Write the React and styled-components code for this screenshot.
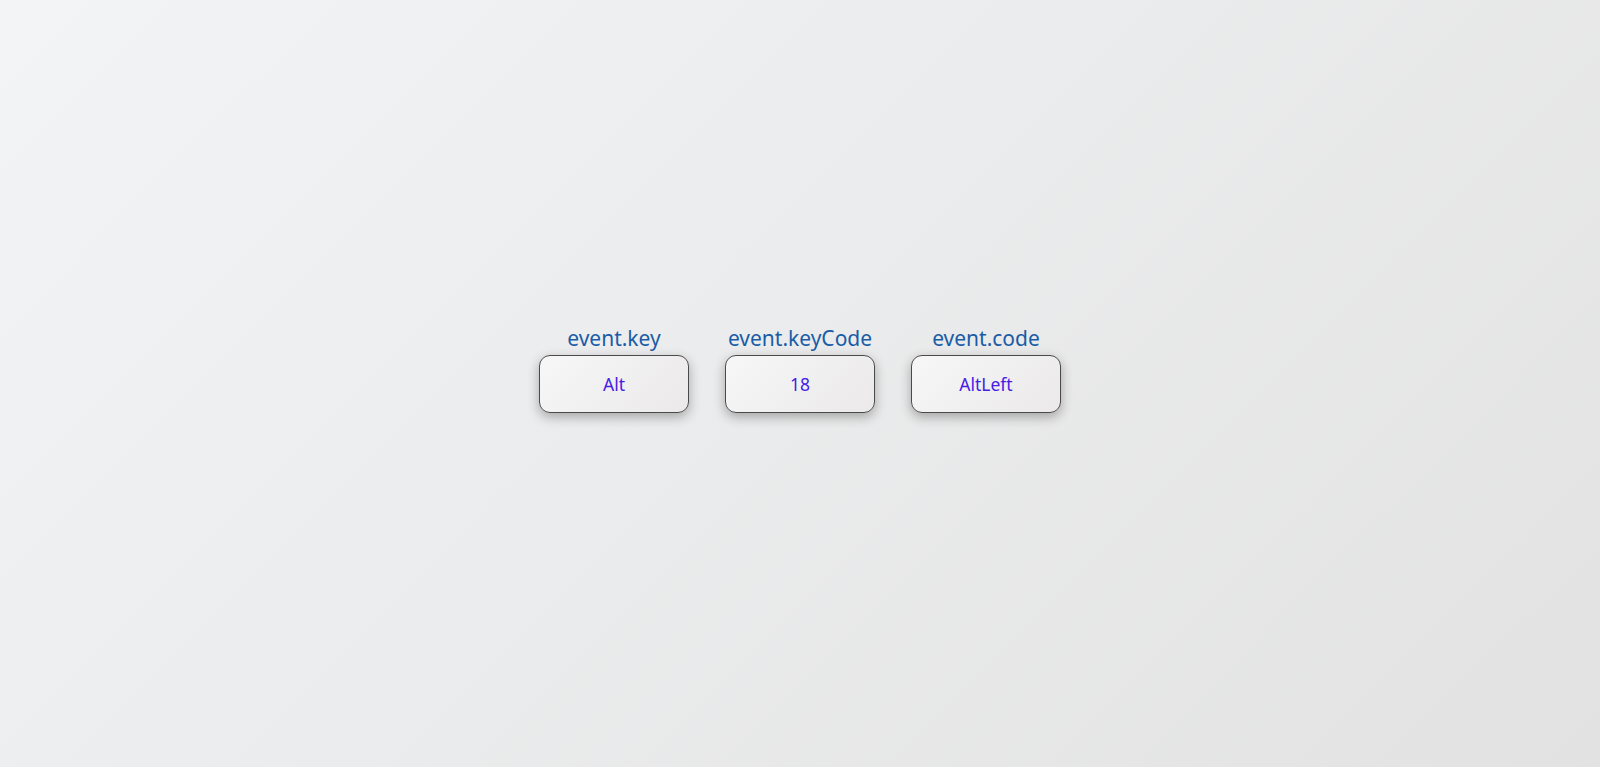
import React from "react";
import styled, { createGlobalStyle } from "styled-components";

const Global = createGlobalStyle`
  html, body { margin: 0; padding: 0; height: 100%; }
  body {
    font-family: "Segoe UI", "Noto Sans", "Open Sans", sans-serif;
    background: linear-gradient(135deg, #f3f4f6 0%, #e2e2e2 100%);
    background-attachment: fixed;
  }
  #root { min-height: 100vh; }
`;

const Page = styled.main`
  min-height: 100vh;
  display: flex;
  align-items: center;
  justify-content: center;
  padding: 0 0 30px 0;
  box-sizing: border-box;
`;

const Row = styled.div`
  display: flex;
  gap: 36px;
`;

const Column = styled.div`
  display: flex;
  flex-direction: column;
  align-items: center;
`;

const Label = styled.div`
  color: #1a5ca6;
  font-size: 21px;
  line-height: 28px;
  margin-bottom: 3px;
`;

const KeyBox = styled.div`
  box-sizing: border-box;
  width: 150px;
  height: 58px;
  display: flex;
  align-items: center;
  justify-content: center;
  border: 1px solid #4a4a4a;
  border-radius: 11px;
  background: linear-gradient(135deg, #f7f7f7 0%, #ebe9ea 100%);
  box-shadow: 0 4px 12px rgba(0, 0, 0, 0.3);
  color: #4621e4;
  font-size: 17.5px;
`;

const items = [
  { label: "event.key", value: "Alt" },
  { label: "event.keyCode", value: "18" },
  { label: "event.code", value: "AltLeft" },
];

export default function App() {
  return (
    <>
      <Global />
      <Page>
        <Row>
          {items.map((it) => (
            <Column key={it.label}>
              <Label>{it.label}</Label>
              <KeyBox>{it.value}</KeyBox>
            </Column>
          ))}
        </Row>
      </Page>
    </>
  );
}
